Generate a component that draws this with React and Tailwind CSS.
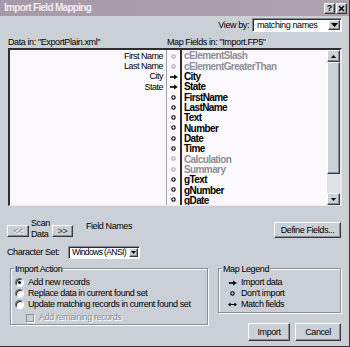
import React from "react";

const RAISED =
  "border border-t-white border-l-white border-r-[#3a3a3a] border-b-[#3a3a3a] shadow-[inset_-1px_-1px_0_#8b8e94] bg-[#cbcfd6]";
const SUNKEN =
  "border border-t-[#85888e] border-l-[#85888e] border-r-white border-b-white shadow-[inset_1px_1px_0_#2e2e2e]";
const ETCHED =
  "border border-[#8a8e95] shadow-[1px_1px_0_#ffffff,inset_1px_1px_0_#ffffff]";

const fields = [
  { name: "cElementSlash", gray: true, icon: "ring" },
  { name: "cElementGreaterThan", gray: true, icon: "ring" },
  { name: "City", icon: "arrow" },
  { name: "State", icon: "arrow" },
  { name: "FirstName", icon: "ring" },
  { name: "LastName", icon: "ring" },
  { name: "Text", icon: "ring" },
  { name: "Number", icon: "ring" },
  { name: "Date", icon: "ring" },
  { name: "Time", icon: "ring" },
  { name: "Calculation", gray: true, icon: "ring" },
  { name: "Summary", gray: true, icon: "ring" },
  { name: "gText", icon: "ring" },
  { name: "gNumber", icon: "ring" },
  { name: "gDate", icon: "ring" },
];

const dataNames = ["First Name", "Last Name", "City", "State"];

function Ring() {
  return (
    <svg width="5" height="5" viewBox="0 0 5 5">
      <circle cx="2.5" cy="2.5" r="1.7" fill="none" stroke="currentColor" strokeWidth="1.1" />
    </svg>
  );
}

function Arrow() {
  return (
    <svg width="8" height="6" viewBox="0 0 8 6">
      <path d="M0 3H5" stroke="currentColor" strokeWidth="1.6" />
      <path d="M4 0.4L7.8 3L4 5.6Z" fill="currentColor" />
    </svg>
  );
}

function DoubleArrow() {
  return (
    <svg width="9" height="5" viewBox="0 0 9 5">
      <path d="M2 2.5H7" stroke="currentColor" strokeWidth="1" />
      <path d="M0 2.5L2.6 0.5V4.5Z" fill="currentColor" />
      <path d="M9 2.5L6.4 0.5V4.5Z" fill="currentColor" />
    </svg>
  );
}

function TriDown({ w = 7, h = 4 }) {
  return (
    <svg width={w} height={h} viewBox={`0 0 ${w} ${h}`}>
      <path d={`M0 0H${w}L${w / 2} ${h}Z`} fill="#000" />
    </svg>
  );
}

function TriUp({ w = 5, h = 3 }) {
  return (
    <svg width={w} height={h} viewBox={`0 0 ${w} ${h}`}>
      <path d={`M0 ${h}H${w}L${w / 2} 0Z`} fill="#000" />
    </svg>
  );
}

function Dropdown({ text, width, btn = 12, textClass = "pl-[2px]" }) {
  return (
    <div className={`${SUNKEN} bg-white flex items-stretch h-full p-[1px] pl-[2px]`} style={{ width }}>
      <div className={`flex-1 flex items-center whitespace-nowrap ${textClass}`}>{text}</div>
      <div className={`${RAISED} flex items-center justify-center shrink-0`} style={{ width: btn }}>
        <TriDown w={btn > 10 ? 7 : 5} h={btn > 10 ? 4 : 3} />
      </div>
    </div>
  );
}

function Radio({ checked }) {
  return (
    <div className="w-[9px] h-[9px] rounded-full border border-t-[#6b6e74] border-l-[#6b6e74] border-r-white border-b-white bg-white shadow-[inset_1px_1px_0_#2e2e2e] flex items-center justify-center">
      {checked && <div className="w-[3px] h-[3px] rounded-full bg-black" />}
    </div>
  );
}

export default function App() {
  return (
    <div className="w-[350px] h-[347px] bg-[#cbcfd6] border-r border-b border-r-[#333333] border-b-[#333333] flex flex-col font-['Liberation_Sans',Arial,sans-serif] text-[9px] tracking-[-0.4px] text-black leading-none overflow-hidden">
      {/* Title bar */}
      <div className="h-[16px] shrink-0 bg-gradient-to-r from-[#a59aa7] to-[#aba2ad] flex items-center pl-[4px] pr-[2px]">
        <span className="text-[10px] font-bold tracking-[-0.7px] text-[#f1ecf2]">Import Field Mapping</span>
        <div className="ml-auto flex gap-[1px]">
          <div className={`${RAISED} w-[11px] h-[11px] flex items-center justify-center text-[9px] font-bold tracking-normal`}>?</div>
          <div className={`${RAISED} w-[11px] h-[11px] flex items-center justify-center`}>
            <svg width="7" height="7" viewBox="0 0 7 7">
              <path d="M1 1L6 6M6 1L1 6" stroke="#000" strokeWidth="1.5" />
            </svg>
          </div>
        </div>
      </div>

      {/* View by row */}
      <div className="mt-[2px] h-[14px] shrink-0 flex items-center justify-end pr-[7px]">
        <span className="mr-[3px]">View by:</span>
        <Dropdown text="matching names" width={90} />
      </div>

      {/* Labels */}
      <div className="mt-[5px] h-[10px] shrink-0 flex items-center">
        <div className="w-[167px] pl-[8px]">Data in: "ExportPlain.xml"</div>
        <div>Map</div>
        <div className="ml-[2px]">Fields in: "Import.FP5"</div>
      </div>

      {/* Lists */}
      <div className="mt-[1px] ml-[8px] w-[334px] h-[158px] shrink-0 flex border-t-2 border-l-2 border-r-2 border-b border-t-[#2f2f2f] border-l-[#2f2f2f] border-r-[#e6e8ec] border-b-[#e6e8ec]">
        <div className="w-[156px] bg-[#fcf9fc] flex flex-col items-end pr-[3px] pt-[1px] tracking-[-0.5px]">
          {dataNames.map((n) => (
            <div key={n} className="h-[10.35px] flex items-center">{n}</div>
          ))}
        </div>
        <div className="w-[1px] bg-[#9c9fa5]" />
        <div className="w-[13px] bg-[#fcf9fc] flex flex-col items-center pt-[1px]">
          {fields.map((f) => (
            <div key={f.name} className={`h-[10.35px] flex items-center ${f.gray ? "text-[#a3a3aa]" : "text-black"}`}>
              {f.icon === "arrow" ? <Arrow /> : <Ring />}
            </div>
          ))}
        </div>
        <div className="w-[2px] bg-[#2f2f2f]" />
        <div className="w-[145px] bg-[#fcf9fc] pl-[2px] pt-[1px] text-[10px] font-bold tracking-[-0.6px] overflow-hidden">
          {fields.map((f) => (
            <div key={f.name} className={`h-[10.35px] flex items-center whitespace-nowrap ${f.gray ? "text-[#8f8f96]" : "text-black"}`}>
              {f.name}
            </div>
          ))}
        </div>
        <div className="w-[13px] flex flex-col bg-[#dfe1e5]">
          <div className={`${RAISED} h-[12px] shrink-0 flex items-center justify-center`}>
            <TriUp />
          </div>
          <div className="flex-1">
            <div className={`${RAISED} h-[112px]`} />
          </div>
          <div className={`${RAISED} h-[12px] shrink-0 flex items-center justify-center`}>
            <TriDown w={5} h={3} />
          </div>
        </div>
      </div>

      {/* Scan row */}
      <div className="mt-[12px] h-[21px] shrink-0 flex items-start">
        <div className={`${RAISED} ml-[7px] mt-[7px] w-[22px] h-[12px] flex items-center justify-center text-[#8d9097] [text-shadow:1px_1px_0_#fff]`}>
          {"<<"}
        </div>
        <div className="ml-[2px] leading-[11px]">
          <div>Scan</div>
          <div>Data</div>
        </div>
        <div className={`${RAISED} ml-[2px] mt-[7px] w-[21px] h-[12px] flex items-center justify-center text-[#333]`}>
          {">>"}
        </div>
        <div className="ml-[13px] mt-[3px] leading-[10px]">Field Names</div>
        <div className={`${RAISED} ml-auto mr-[8px] mt-[4px] w-[67px] h-[16px] flex items-center justify-center`}>
          Define Fields...
        </div>
      </div>

      {/* Character set */}
      <div className="mt-[7px] h-[13px] shrink-0 flex items-center pl-[7px]">
        <div className="w-[61px]">Character Set:</div>
        <Dropdown text="Windows (ANSI)" width={72} btn={9} textClass="text-[8.5px] tracking-[-0.6px] pl-[1px]" />
      </div>

      {/* Bottom */}
      <div className="mt-[9px] flex items-start shrink-0">
        <div className={`${ETCHED} relative ml-[10px] w-[198px] h-[57px] pl-[4px] pt-[8px]`}>
          <span className="absolute left-[3px] top-[-5px] px-[1px] bg-[#cbcfd6] leading-[10px]">Import Action</span>
          <div className="h-[11px] flex items-center">
            <Radio checked />
            <span className="ml-[4px]">Add new records</span>
          </div>
          <div className="h-[11px] flex items-center">
            <Radio />
            <span className="ml-[4px]">Replace data in current found set</span>
          </div>
          <div className="h-[11px] flex items-center">
            <Radio />
            <span className="ml-[4px] whitespace-nowrap">Update matching records in current found set</span>
          </div>
          <div className="mt-[2px] h-[11px] flex items-center pl-[11px]">
            <div className="w-[8px] h-[8px] border border-[#8d9097] shadow-[1px_1px_0_#fff]" />
            <span className="ml-[5px] text-[#8d9097] [text-shadow:1px_1px_0_#fff]">Add remaining records</span>
          </div>
        </div>

        <div className="ml-[10px] w-[123px] flex flex-col">
          <div className={`${ETCHED} relative h-[45px] pl-[9px] pt-[8px]`}>
            <span className="absolute left-[3px] top-[-5px] px-[1px] bg-[#cbcfd6] leading-[10px]">Map Legend</span>
            <div className="h-[11px] flex items-center">
              <div className="w-[9px] flex justify-center"><Arrow /></div>
              <span className="ml-[4px]">Import data</span>
            </div>
            <div className="h-[11px] flex items-center">
              <div className="w-[9px] flex justify-center"><Ring /></div>
              <span className="ml-[4px]">Don't import</span>
            </div>
            <div className="h-[11px] flex items-center">
              <div className="w-[9px] flex justify-center"><DoubleArrow /></div>
              <span className="ml-[4px]">Match fields</span>
            </div>
          </div>
          <div className="mt-[10px] h-[18px] flex justify-end gap-[5px]">
            <div className={`${RAISED} w-[42px] h-full flex items-center justify-center`}>Import</div>
            <div className={`${RAISED} w-[46px] h-full flex items-center justify-center`}>Cancel</div>
          </div>
        </div>
      </div>
    </div>
  );
}
